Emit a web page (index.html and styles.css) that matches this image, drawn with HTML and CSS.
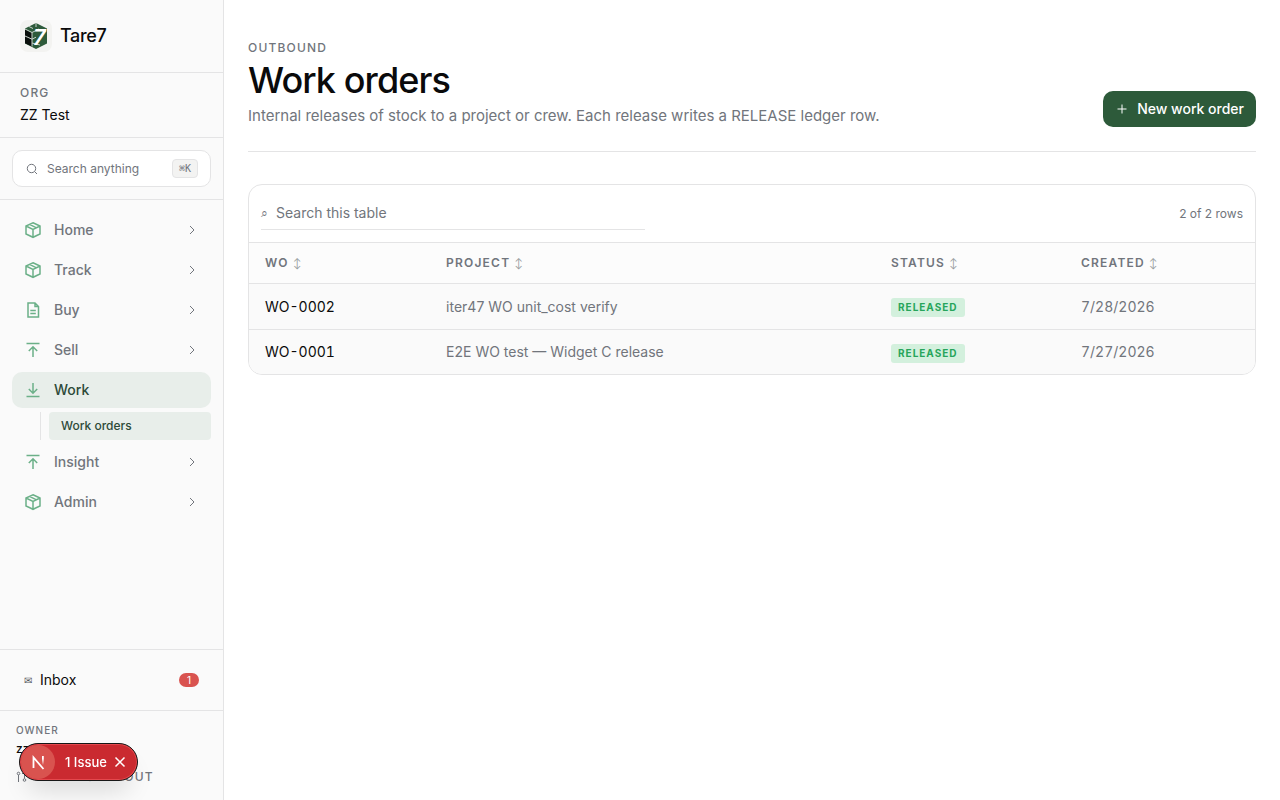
FILE: index.html
```
<!DOCTYPE html>
<html lang="en">

<head>
    <meta charset="UTF-8">
    <meta name="viewport" content="width=device-width, initial-scale=1.0">
    <title>Work orders - Tare7</title>
    <link rel="stylesheet" href="styles.css">
</head>

<body>
    <!-- shared icons -->
    <svg class="sprite" aria-hidden="true">
        <symbol id="box" viewBox="0 0 18 18">
            <path d="M9 1.800 16 5v8l-7 3.300L2 13V5zM2 5l7 3.500L16 5M9 8.500v7.800M5.500 3.400l7 3.400" />
        </symbol>
        <symbol id="doc" viewBox="0 0 18 18">
            <path d="M4 2h7l3.500 3.500V16H4zM11 2v3.500h3.500M6.300 9.500h5.500M6.300 12.500h5.500" />
        </symbol>
        <symbol id="up" viewBox="0 0 18 18">
            <path d="M2.500 2.500h13M9 16V6M4.800 10 9 5.800l4.200 4.200" />
        </symbol>
        <symbol id="down" viewBox="0 0 18 18">
            <path d="M2.500 15.500h13M9 2v10M4.800 8 9 12.200 13.200 8" />
        </symbol>
        <symbol id="chevron" viewBox="0 0 14 14">
            <path d="m5 3 4 4-4 4" />
        </symbol>
    </svg>

    <div class="layout">
        <aside class="sidebar">
            <a href="#" class="brand">
                <svg class="logo" viewBox="0 0 32 32" aria-hidden="true">
                    <rect width="32" height="32" rx="8" fill="#f3f3f1" />
                    <path d="M16 3 27 8.500v15L16 29 5 23.500v-15z" fill="#2d5a3a" />
                    <path d="M5 9.500 12 13v13.500l-7-3.200z" fill="#0a0f0c" />
                    <path d="M5 9 12 12.500 19 9M16 3v4M9 6.500l4 2M12 12.500v14M5 16l7 3.200 4-2M20 25l-8-2" fill="none" stroke="#c9d2cb" stroke-width="1" />
                    <text x="13" y="25" class="logo-mark">7</text>
                </svg>
                <span>Tare7</span>
            </a>
            <div class="org">
                <div class="eyebrow">ORG</div>
                <div class="org-name">ZZ Test</div>
            </div>
            <div class="search-area">
                <button class="search-btn" type="button">
                    <svg class="search-icon" viewBox="0 0 14 14" aria-hidden="true">
                        <circle cx="6.500" cy="6.500" r="4.200" />
                        <path d="m9.500 9.500 2.500 2.500" />
                    </svg>
                    <span class="search-label">Search anything</span>
                    <kbd>⌘K</kbd>
                </button>
            </div>
            <nav class="nav">
                <button class="nav-item" type="button"><svg class="icon"><use href="#box" /></svg><span>Home</span><svg class="chevron"><use href="#chevron" /></svg></button>
                <button class="nav-item" type="button"><svg class="icon"><use href="#box" /></svg><span>Track</span><svg class="chevron"><use href="#chevron" /></svg></button>
                <button class="nav-item" type="button"><svg class="icon"><use href="#doc" /></svg><span>Buy</span><svg class="chevron"><use href="#chevron" /></svg></button>
                <button class="nav-item" type="button"><svg class="icon"><use href="#up" /></svg><span>Sell</span><svg class="chevron"><use href="#chevron" /></svg></button>
                <button class="nav-item active" type="button"><svg class="icon"><use href="#down" /></svg><span>Work</span></button>
                <div class="sub-nav">
                    <a href="#" class="sub-item">Work orders</a>
                </div>
                <button class="nav-item" type="button"><svg class="icon"><use href="#up" /></svg><span>Insight</span><svg class="chevron"><use href="#chevron" /></svg></button>
                <button class="nav-item" type="button"><svg class="icon"><use href="#box" /></svg><span>Admin</span><svg class="chevron"><use href="#chevron" /></svg></button>
            </nav>
            <div class="inbox-area">
                <a href="#" class="inbox">
                    <span class="mail">✉</span>
                    <span class="inbox-text">Inbox</span>
                    <span class="count">1</span>
                </a>
            </div>
            <div class="account">
                <div class="role">OWNER</div>
                <div class="user">zz test</div>
                <div class="account-row">
                    <svg class="theme-icon" viewBox="0 0 12 12" aria-hidden="true">
                        <circle cx="2.500" cy="2.500" r="1.300" />
                        <circle cx="8.500" cy="9" r="1.300" />
                        <path d="M2.500 4v7M8.500 7.500V2.500H6" />
                    </svg>
                    <button class="sign-out" type="button">SIGN OUT</button>
                </div>
            </div>
        </aside>

        <main class="main">
            <header class="page-head">
                <div>
                    <div class="eyebrow">OUTBOUND</div>
                    <h1>Work orders</h1>
                    <p class="intro">Internal releases of stock to a project or crew. Each release writes a RELEASE ledger row.</p>
                </div>
                <button class="new-btn" type="button">
                    <svg viewBox="0 0 14 14" aria-hidden="true"><path d="M7 2.500v9M2.500 7h9" /></svg>
                    New work order
                </button>
            </header>

            <section class="card">
                <div class="toolbar">
                    <label class="table-search">
                        <span class="glass">⌕</span>
                        <input type="text" placeholder="Search this table" aria-label="Search this table">
                    </label>
                    <span class="row-count">2 of 2 rows</span>
                </div>
                <table>
                    <colgroup>
                        <col class="col-wo">
                        <col>
                        <col class="col-small">
                        <col class="col-small">
                    </colgroup>
                    <thead>
                        <tr>
                            <th>WO <span class="sort">↕</span></th>
                            <th>PROJECT <span class="sort">↕</span></th>
                            <th>STATUS <span class="sort">↕</span></th>
                            <th>CREATED <span class="sort">↕</span></th>
                        </tr>
                    </thead>
                    <tbody>
                        <tr>
                            <td><a href="#" class="wo">WO-0002</a></td>
                            <td>iter47 WO unit_cost verify</td>
                            <td><span class="status">RELEASED</span></td>
                            <td class="date">7/28/2026</td>
                        </tr>
                        <tr>
                            <td><a href="#" class="wo">WO-0001</a></td>
                            <td>E2E WO test — Widget C release</td>
                            <td><span class="status">RELEASED</span></td>
                            <td class="date">7/27/2026</td>
                        </tr>
                    </tbody>
                </table>
            </section>
        </main>
    </div>

    <!-- dev overlay -->
    <div class="issue">
        <button class="issue-logo" type="button" aria-label="Open dev tools">
            <svg viewBox="0 0 34 34" aria-hidden="true">
                <defs>
                    <linearGradient id="fade" x1="0" y1="0" x2="0" y2="1">
                        <stop offset="0.3" stop-color="#fff" />
                        <stop offset="1" stop-color="#fff" stop-opacity="0" />
                    </linearGradient>
                </defs>
                <path d="M12.500 23V12.500L22.500 24" fill="none" stroke="#fff" stroke-width="1.800" />
                <rect x="21" y="11" width="1.800" height="9" fill="url(#fade)" />
            </svg>
        </button>
        <button class="issue-text" type="button">1 Issue</button>
        <button class="issue-close" type="button" aria-label="Close">
            <svg viewBox="0 0 14 14" aria-hidden="true"><path d="m2.500 2.500 9 9M11.500 2.500l-9 9" /></svg>
        </button>
    </div>
</body>

</html>
```
FILE: styles.css
```
* {
    box-sizing: border-box;
    margin: 0;
}

body {
    font-family: Inter, "Liberation Sans", sans-serif;
    font-size: 14px;
    line-height: 20px;
    color: #0a0a0b;
    background-color: #fff;
}

button,
input {
    font: inherit;
    color: inherit;
    background: none;
    border: none;
    padding: 0;
}

button {
    cursor: pointer;
}

a {
    color: inherit;
    text-decoration: none;
}

svg {
    fill: none;
    stroke: currentColor;
    flex-shrink: 0;
}

.sprite {
    display: none;
}

.layout {
    display: flex;
    min-height: 100vh;
}

/* sidebar */
.sidebar {
    width: 224px;
    flex-shrink: 0;
    display: flex;
    flex-direction: column;
    background-color: #fafafa;
    border-right: 1px solid #e4e4e5;
}

.brand {
    display: flex;
    align-items: center;
    gap: 8px;
    padding: 20px;
    font-size: 18px;
    font-weight: 500;
    line-height: 32px;
    letter-spacing: -0.02em;
    border-bottom: 1px solid #e4e4e5;
}

.logo {
    width: 32px;
    height: 32px;
    stroke: none;
}

.logo-mark {
    font-size: 22px;
    font-weight: 600;
    font-style: italic;
    fill: #fff;
}

.org {
    padding: 12px 20px;
    border-bottom: 1px solid #e4e4e5;
}

.eyebrow {
    font-size: 12px;
    font-weight: 500;
    line-height: 16px;
    letter-spacing: 0.1em;
    color: #71757c;
}

.org-name {
    margin-top: 4px;
}

.search-area {
    padding: 12px;
    border-bottom: 1px solid #e4e4e5;
}

.search-btn {
    display: flex;
    align-items: center;
    gap: 8px;
    width: 100%;
    height: 37px;
    padding: 0 12px;
    font-size: 12px;
    color: #71757c;
    background-color: #fff;
    border: 1px solid #e4e4e5;
    border-radius: 10px;
}

.search-icon {
    width: 14px;
    height: 14px;
}

.search-label {
    flex-grow: 1;
    text-align: left;
}

kbd {
    padding: 0 6px;
    font-family: "DejaVu Sans Mono", monospace;
    font-size: 10px;
    line-height: 17px;
    background-color: #f3f3f2;
    border: 1px solid #e4e4e5;
    border-radius: 4px;
}

.nav {
    flex-grow: 1;
    display: flex;
    flex-direction: column;
    gap: 4px;
    padding: 12px;
}

.nav-item {
    display: flex;
    align-items: center;
    gap: 12px;
    height: 36px;
    padding: 0 12px;
    font-weight: 500;
    color: #71757c;
    border-radius: 10px;
}

.nav-item span {
    flex-grow: 1;
    text-align: left;
}

.icon {
    width: 18px;
    height: 18px;
    color: #6bb088;
    stroke-width: 1.5;
}

.chevron {
    width: 14px;
    height: 14px;
}

.active {
    color: #2d4a38;
    background-color: #e8eeea;
}

.sub-nav {
    margin-left: 28px;
    padding-left: 8px;
    border-left: 1px solid #e4e4e5;
}

.sub-item {
    display: block;
    padding: 4px 12px;
    font-size: 12px;
    font-weight: 500;
    color: #2d4a38;
    background-color: #e8eeea;
    border-radius: 4px;
}

.inbox-area {
    padding: 12px;
    border-top: 1px solid #e4e4e5;
}

.inbox {
    display: flex;
    align-items: center;
    gap: 8px;
    padding: 8px 12px;
}

.mail {
    font-size: 10px;
    color: #52565c;
}

.inbox-text {
    flex-grow: 1;
}

.count {
    padding: 0 8px;
    font-size: 10px;
    line-height: 14px;
    color: #fff;
    background-color: #d9534f;
    border-radius: 7px;
}

.account {
    padding: 12px 16px 13px;
    border-top: 1px solid #e4e4e5;
}

.role {
    font-size: 10px;
    font-weight: 500;
    line-height: 14px;
    letter-spacing: 0.1em;
    color: #71757c;
}

.user {
    margin-top: 2px;
    font-size: 12px;
    font-weight: 500;
}

.account-row {
    display: flex;
    align-items: center;
    gap: 58px;
    margin-top: 8px;
    color: #71757c;
}

.theme-icon {
    width: 12px;
    height: 12px;
}

.sign-out {
    font-size: 12px;
    font-weight: 500;
    letter-spacing: 0.1em;
}

/* page */
.main {
    flex-grow: 1;
    min-width: 0;
    padding: 40px 24px;
}

.page-head {
    display: flex;
    align-items: flex-end;
    justify-content: space-between;
    gap: 24px;
    padding-bottom: 24px;
    margin-bottom: 32px;
    border-bottom: 1px solid #e4e4e5;
}

h1 {
    margin-top: 4px;
    font-size: 36px;
    font-weight: 500;
    line-height: 40px;
    letter-spacing: -0.025em;
}

.intro {
    margin-top: 4px;
    font-size: 15px;
    line-height: 23px;
    color: #71757c;
}

.new-btn {
    display: flex;
    align-items: center;
    gap: 8px;
    height: 36px;
    padding: 0 12px;
    font-weight: 500;
    color: #fff;
    white-space: nowrap;
    background-color: #2d5a3a;
    border-radius: 10px;
}

.new-btn svg {
    width: 14px;
    height: 14px;
}

.card {
    border: 1px solid #e4e4e5;
    border-radius: 14px;
    overflow: hidden;
}

.toolbar {
    display: flex;
    align-items: center;
    justify-content: space-between;
    padding: 12px;
    border-bottom: 1px solid #e4e4e5;
}

.table-search {
    display: flex;
    align-items: center;
    gap: 8px;
    width: 100%;
    max-width: 384px;
    height: 33px;
    color: #71757c;
    border-bottom: 1px solid #e4e4e5;
}

.table-search input {
    flex-grow: 1;
    outline: none;
}

.table-search input::placeholder {
    color: #71757c;
}

.glass {
    font-size: 12px;
}

.row-count {
    font-size: 12px;
    color: #71757c;
}

table {
    width: 100%;
    table-layout: fixed;
    border-spacing: 0;
    background-color: #fafafa;
}

.col-wo {
    width: 18%;
}

.col-small {
    width: 190px;
}

th,
td {
    padding: 0 16px;
    text-align: left;
}

th {
    height: 40px;
    font-size: 12px;
    font-weight: 600;
    letter-spacing: 0.1em;
    color: #71757c;
    background-color: #fcfcfc;
}

.sort {
    font-size: 10px;
    font-weight: 400;
    color: #989c9f;
}

td {
    height: 46px;
    color: #71757c;
    border-top: 1px solid #e4e4e5;
}

tbody tr:last-child td {
    height: 45px;
}

.wo {
    color: #0a0a0b;
    font-variant-numeric: tabular-nums;
}

.date {
    font-variant-numeric: tabular-nums;
}

.status {
    display: inline-block;
    padding: 0 7px;
    font-size: 10px;
    font-weight: 700;
    line-height: 19px;
    letter-spacing: 0.1em;
    color: #27a55b;
    background-color: #d3f0dd;
    border-radius: 3px;
}

/* dev overlay, sits over the sidebar footer */
.issue {
    position: fixed;
    left: 19px;
    bottom: 19px;
    display: flex;
    align-items: center;
    height: 38px;
    padding: 0 10px 0 1px;
    font-size: 13px;
    font-weight: 500;
    color: #fff;
    background-color: #ca2a30;
    border: 1px solid #171717;
    border-radius: 19px;
    box-shadow: inset 0 0 0 1px #e5484d, 0 16px 24px -8px rgba(0, 0, 0, 0.15);
}

.issue-logo {
    width: 34px;
    height: 34px;
    background-color: #d9534f;
    border-radius: 50%;
}

.issue-logo svg {
    display: block;
    stroke: none;
}

.issue-text {
    margin: 0 6px 0 10px;
}

.issue-close {
    width: 14px;
    height: 14px;
}

.issue-close svg {
    display: block;
    stroke-width: 1.5;
}
```
